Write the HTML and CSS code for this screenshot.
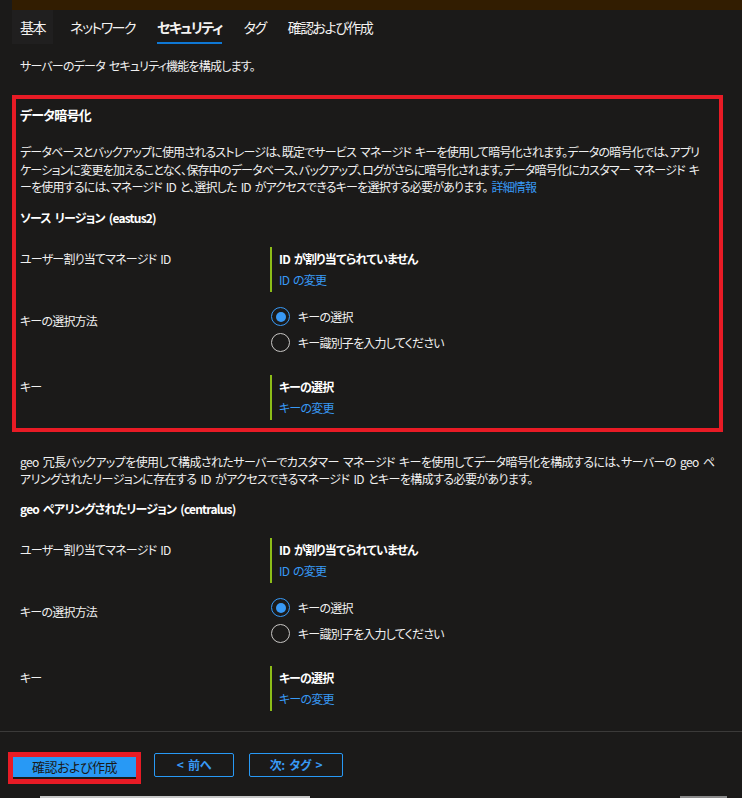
FILE: index.html
```html
<!DOCTYPE html>
<html lang="ja">
<head>
<meta charset="utf-8">
<title>セキュリティ</title>
<link rel="stylesheet" href="styles.css">
</head>
<body>
<div class="topbar"><div class="topbar-fill"></div></div>
<nav class="tabs">
  <div class="tab tab-hover"><span>基本</span></div>
  <div class="tab"><span>ネットワーク</span></div>
  <div class="tab tab-active"><span>セキュリティ</span></div>
  <div class="tab"><span>タグ</span></div>
  <div class="tab"><span>確認および作成</span></div>
</nav>
<main class="content">
  <p class="intro">サーバーのデータ セキュリティ機能を構成します。</p>

  <section class="highlight">
    <h2 class="section-title">データ暗号化</h2>
    <p class="para">データベースとバックアップに使用されるストレージは、既定でサービス マネージド キーを使用して暗号化されます。データの暗号化では、アプリ<br>ケーションに変更を加えることなく、保存中のデータベース、バックアップ、ログがさらに暗号化されます。データ暗号化にカスタマー マネージド キ<br>ーを使用するには、マネージド ID と、選択した ID がアクセスできるキーを選択する必要があります。 <a class="link" href="#">詳細情報</a></p>
    <h3 class="sub-title">ソース リージョン (eastus2)</h3>
    <div class="row row-first">
      <div class="label">ユーザー割り当てマネージド ID</div>
      <div class="value-block">
        <div class="value-strong">ID が割り当てられていません</div>
        <a class="link" href="#">ID の変更</a>
      </div>
    </div>
    <div class="row row-radio">
      <div class="label label-radio">キーの選択方法</div>
      <div class="radios">
        <label class="radio"><span class="dot dot-on"></span><span>キーの選択</span></label>
        <label class="radio"><span class="dot"></span><span>キー識別子を入力してください</span></label>
      </div>
    </div>
    <div class="row row-last">
      <div class="label">キー</div>
      <div class="value-block">
        <div class="value-strong">キーの選択</div>
        <a class="link" href="#">キーの変更</a>
      </div>
    </div>
  </section>

  <section class="geo">
    <p class="para">geo 冗長バックアップを使用して構成されたサーバーでカスタマー マネージド キーを使用してデータ暗号化を構成するには、サーバーの geo ペ<br>アリングされたリージョンに存在する ID がアクセスできるマネージド ID とキーを構成する必要があります。</p>
    <h3 class="sub-title sub-geo">geo ペアリングされたリージョン (centralus)</h3>
    <div class="row row-first">
      <div class="label">ユーザー割り当てマネージド ID</div>
      <div class="value-block">
        <div class="value-strong">ID が割り当てられていません</div>
        <a class="link" href="#">ID の変更</a>
      </div>
    </div>
    <div class="row row-radio">
      <div class="label label-radio">キーの選択方法</div>
      <div class="radios">
        <label class="radio"><span class="dot dot-on"></span><span>キーの選択</span></label>
        <label class="radio"><span class="dot"></span><span>キー識別子を入力してください</span></label>
      </div>
    </div>
    <div class="row row-last">
      <div class="label">キー</div>
      <div class="value-block">
        <div class="value-strong">キーの選択</div>
        <a class="link" href="#">キーの変更</a>
      </div>
    </div>
  </section>
</main>
<footer class="actions">
  <div class="primary-frame"><button class="btn-primary">確認および作成</button></div>
  <button class="btn-secondary btn-prev">&lt; 前へ</button>
  <button class="btn-secondary btn-next">次: タグ &gt;</button>
</footer>
<div class="scrollstrip"><div class="thumb-a"></div><div class="thumb-b"></div></div>
</body>
</html>
```

FILE: styles.css
```css
* { box-sizing: border-box; }
html, body { margin: 0; padding: 0; }
body {
  width: 742px;
  height: 798px;
  overflow: hidden;
  background: #1b1a19;
  color: #f0f0f0;
  font-family: "Noto Sans CJK JP", "Noto Sans", sans-serif;
  font-feature-settings: "palt";
  font-size: 12px;
  letter-spacing: -0.8px;
  word-spacing: 2px;
  display: flex;
  flex-direction: column;
}
.topbar {
  height: 10px;
  padding-left: 12px;
  display: flex;
}
.topbar-fill { flex: 1; background: #321d01; }

.tabs {
  display: flex;
  gap: 6px;
  padding-left: 12px;
  height: 34px;
}
.tab {
  padding: 7px 8px 0 8px;
  font-size: 14px;
  letter-spacing: -1.5px;
  color: #f3f2f1;
}
.tab span {
  display: inline-block;
  line-height: 20px;
  padding-bottom: 5px;
  border-bottom: 2px solid transparent;
}
.tab-hover { background: #201f1f; margin-right: 3px; }
.tab-active span { border-bottom-color: #0f78d4; font-weight: 700; }

.content { padding: 0 12px; }
.intro {
  margin: 13px 0 0 8px;
  line-height: 18px;
}
.highlight {
  margin-top: 20px;
  width: 711px;
  border: 4px solid #e81b25;
  padding: 6px 4px 8px 4px;
}
.geo { padding: 0 8px; }
.section-title {
  margin: 0;
  font-size: 13px;
  font-weight: 700;
  line-height: 20px;
  color: #fff;
}
.para {
  margin: 18px 0 0 0;
  line-height: 17.5px;
  white-space: nowrap;
}
.geo .para { margin-top: 21px; letter-spacing: -0.6px; }
.link { color: #3899f5; text-decoration: none; }
.sub-title {
  margin: 12px 0 0 0;
  font-size: 12px;
  font-weight: 700;
  line-height: 20px;
  color: #fff;
}
.sub-geo { margin-top: 11px; }

.row {
  display: grid;
  grid-template-columns: 250px 1fr;
}
.row-first { margin-top: 19px; }
.row-radio { margin-top: 12px; }
.row-last { margin-top: 19px; }
.label {
  padding-top: 1px;
  line-height: 21px;
}
.label-radio { padding-top: 6px; }
.value-block {
  border-left: 2px solid #8cbd18;
  padding: 1px 0 2px 7px;
  line-height: 21px;
  display: flex;
  flex-direction: column;
  align-items: flex-start;
}
.value-strong { font-weight: 700; color: #fff; }

.radios { display: flex; flex-direction: column; }
.radio {
  display: flex;
  align-items: center;
  height: 26px;
  gap: 8px;
  padding-left: 1px;
}
.dot {
  width: 19px;
  height: 19px;
  border-radius: 50%;
  border: 1px solid #c8c6c4;
  display: flex;
  align-items: center;
  justify-content: center;
}
.dot-on { border-color: #3899f5; }
.dot-on::after {
  content: "";
  width: 10px;
  height: 10px;
  border-radius: 50%;
  background: #3899f5;
}

.actions {
  margin-top: auto;
  border-top: 1px solid #3b3a39;
  height: 65px;
  padding: 20px 0 0 8px;
  display: flex;
  align-items: flex-start;
}
.primary-frame {
  border: 5px solid #e81b25;
  width: 133px;
  height: 32px;
}
.btn-primary {
  display: block;
  width: 100%;
  height: 22px;
  margin: 0;
  border: 0;
  border-bottom: 2px solid #1b1a19;
  background: #2899f5;
  color: #1b1a19;
  font-family: inherit;
  font-feature-settings: "palt";
  font-size: 13px;
  letter-spacing: -0.5px;
  line-height: 18px;
  padding: 0;
}
.btn-secondary {
  margin-top: 1px;
  height: 24px;
  border: 1px solid #2899f5;
  border-radius: 2px;
  background: transparent;
  color: #3899f5;
  font-family: inherit;
  font-feature-settings: "palt";
  font-size: 12px;
  letter-spacing: -0.3px;
  word-spacing: 2px;
  font-weight: 700;
  padding: 0;
  line-height: 20px;
}
.btn-prev { margin-left: 13px; width: 80px; }
.btn-next { margin-left: 15px; width: 94px; }

.scrollstrip {
  height: 2px;
  display: flex;
}
.thumb-a { margin-left: 40px; width: 270px; background: #c8c8c8; }
.thumb-b { margin-left: 370px; width: 47px; background: #8a8a8a; }
```
